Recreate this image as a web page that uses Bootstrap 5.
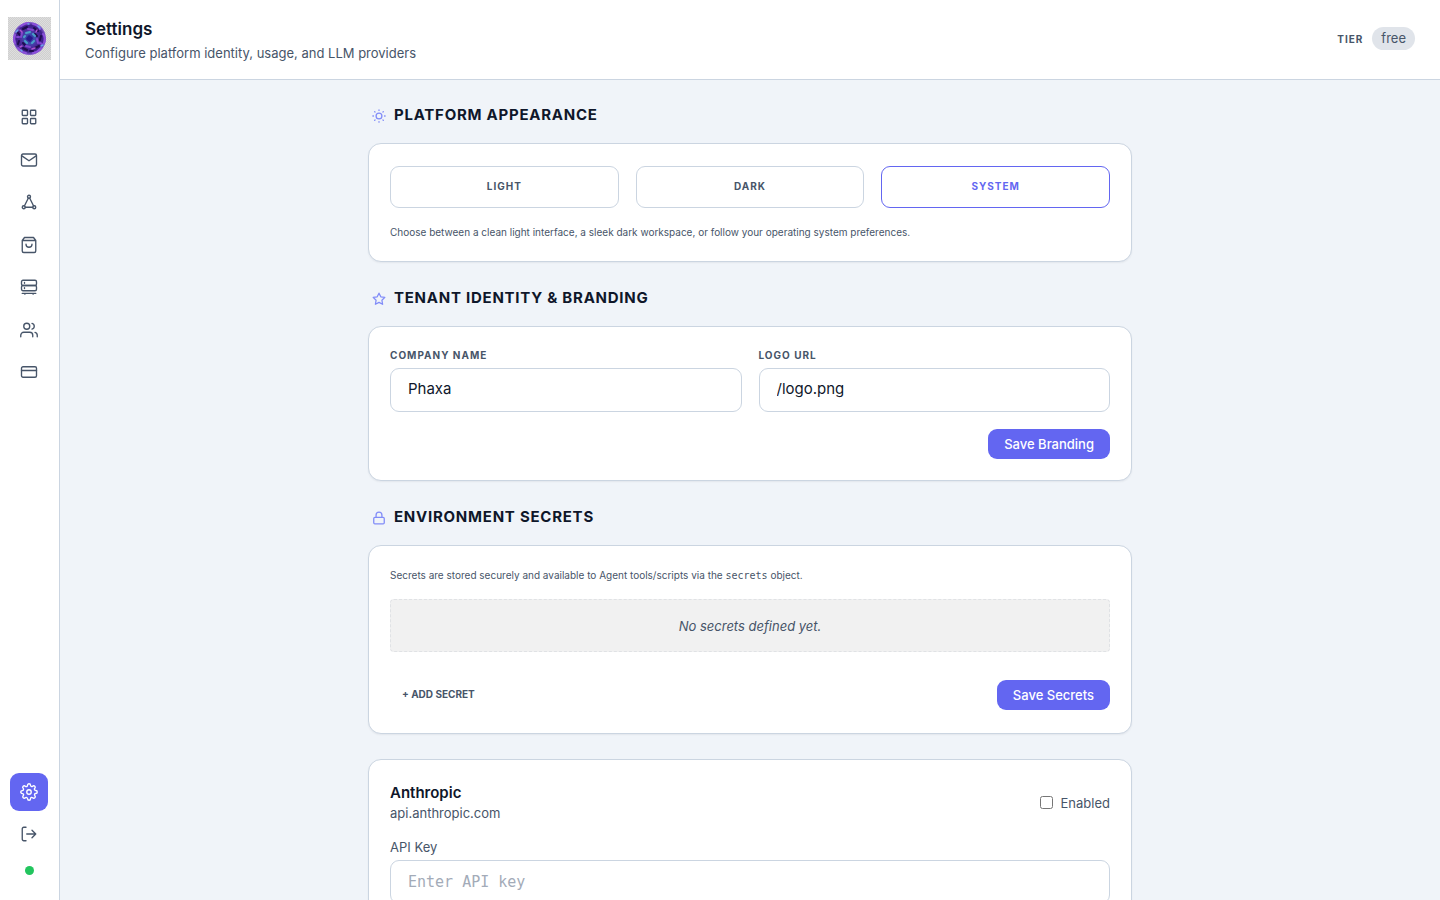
<!DOCTYPE html>
<html lang="en">
<head>
<meta charset="utf-8">
<meta name="viewport" content="width=device-width, initial-scale=1">
<title>Settings</title>
<link href="https://cdn.jsdelivr.net/npm/bootstrap@5.3.0/dist/css/bootstrap.min.css" rel="stylesheet">
<style>
  :root { --ink: #0f172a; --muted: #475569; --line: #cbd5e1; --accent: #6366f1; }
  body { font-family: Inter, sans-serif; font-size: 13px; line-height: 20px; color: var(--ink); background: #f0f4f9; }
  .side-rail { width: 60px; border-right: 1px solid var(--line); padding: 17px 1px 25px 0; }
  .brand-mark { width: 43px; height: 43px; }
  .rail-nav { height: 293px; margin-top: 38px; }
  .rail-link { width: 38px; height: 38px; border-radius: 9px; color: var(--muted); }
  .rail-link.active { background: var(--accent); color: #fff; }
  .rail-link svg { width: 18px; height: 18px; }
  .line-icon { fill: none; stroke: currentColor; stroke-width: 1.8; stroke-linecap: round; stroke-linejoin: round; }
  .status-dot { width: 9px; height: 9px; background: #22c55e; margin-top: 13px; }
  .top-bar { height: 80px; border-bottom: 1px solid var(--line); padding: 0 25px 2px; }
  .top-bar h1 { font-size: 17px; line-height: 28px; font-weight: 600; }
  .muted-text { color: var(--muted); }
  .caps { font-size: 10px; line-height: 12px; font-weight: 700; letter-spacing: 1px; color: var(--muted); }
  .tier { gap: 9px; }
  .tier-pill { background: #e0e4ea; color: var(--muted); font-size: 13px; line-height: 23px; font-weight: 400; padding: 0 9px; }
  .page-scroll { scrollbar-width: none; padding: 24px 16px; }
  .page-scroll::-webkit-scrollbar { display: none; }
  .page-column { max-width: 764px; gap: 25px; }
  .section-title { font-size: 15px; line-height: 22px; font-weight: 700; letter-spacing: .05em; margin-bottom: 17px; padding-left: 4px; gap: 8px; }
  .section-title svg { width: 14px; height: 14px; color: #818cf8; margin-top: 2px; stroke-width: 2.2; }
  .panel { background: #fff; border: 1px solid var(--line); border-radius: 13px; padding: 22px 21px 21px; box-shadow: 0 1px 2px rgba(15, 23, 42, .06); }
  .split { gap: 17px; }
  .theme-btn { height: 42px; border: 1px solid var(--line); border-radius: 9px; background: #fff; padding: 0 0 2px; }
  .theme-btn.active { border-color: var(--accent); color: var(--accent); }
  .fine { font-size: 10px; line-height: 16px; color: var(--muted); }
  .mono { font-family: "DejaVu Sans Mono", monospace; }
  .fine .mono { line-height: 10px; }
  .secrets-note { line-height: 14px; }
  .field-label { margin-bottom: 7px; }
  .field { height: 44px; border: 1px solid var(--line); border-radius: 9px; font-size: 15px; line-height: 22px; color: var(--ink); padding: 0 17px 3px; }
  .field.mono { padding-bottom: 0; }
  .field::placeholder { color: #a3abb8; }
  .actions { margin-top: 17px; }
  .save-btn { height: 30px; border: 0; border-radius: 9px; background: var(--accent); color: #fff; font-size: 13px; line-height: 20px; font-weight: 500; padding: 0 16px; }
  .add-btn { height: 34px; border: 0; font-size: 10px; line-height: 14px; font-weight: 700; color: var(--muted); padding: 0 12px 2px; }
  .empty-box { height: 53px; margin-top: 17px; margin-bottom: 26px; border: 1px dashed #e0e2e5; border-radius: 4px; background: #f1f1f1; }
  .provider-name { font-size: 15px; line-height: 21px; font-weight: 600; }
  .key-label { line-height: 16px; margin: 16px 0 5px; }
  .tick { width: 13px; height: 13px; }
</style>
</head>
<body>
<div class="d-flex vh-100 overflow-hidden">
  <aside class="side-rail bg-white d-flex flex-column align-items-center flex-shrink-0">
    <svg class="brand-mark flex-shrink-0" viewBox="0 0 43 43" role="img" aria-label="Phaxa">
      <defs>
        <pattern id="check" width="2" height="2" patternUnits="userSpaceOnUse"><rect width="2" height="2" fill="#dedede"/><rect width="1" height="1" fill="#cfcfcf"/><rect x="1" y="1" width="1" height="1" fill="#cfcfcf"/></pattern>
        <radialGradient id="orb"><stop offset="0" stop-color="#2b1a93"/><stop offset=".3" stop-color="#3f50b0"/><stop offset=".55" stop-color="#4c2a9c"/><stop offset=".8" stop-color="#3d1e8a"/><stop offset="1" stop-color="#8a62d4"/></radialGradient>
      </defs>
      <rect width="43" height="43" fill="url(#check)"/>
      <circle cx="21.500" cy="21.500" r="16.500" fill="url(#orb)"/>
      <g fill="none" stroke-linecap="round">
        <path d="M13 9q4-3 7-3M25 7q5 1 7 5M35 17q3 4 1 9M33 31q-3 4-8 5M18 36q-5-1-8-5M7 26q-2-4 0-8" stroke="#8c50dc" stroke-width="2"/>
        <path d="M15 12l4-2M26 11l4 3M33 19l-1 4M31 29l-4 2M19 33l-4-2M10 27l1-3M10 16l2 2M22 34h3M27 17l2 2M15 26l2 2" stroke="#1e0d4e" stroke-width="2"/>
        <path d="M20 12l5 1M29 22l1 4M22 30l-4-1M13 20l1-4M32 26l2 1M9 20h2" stroke="#8145cf" stroke-width="2"/>
        <path d="M18 16l4-1M25 17l2 2M26 24l-2 2M19 26l-2-2M16 20l1-1" stroke="#49a0c8" stroke-width="2"/>
        <path d="M8 15l2-2M30 9l2 2M35 28l-2 1M13 33l1 1M20 7h1" stroke="#6ba4ec" stroke-width="1.500"/>
        <path d="M12 13l2 2M24 32l3-1M29 13l-1 2M12 30l2-1" stroke="#ae55cf" stroke-width="1.500"/>
      </g>
      <path d="M21 18l4 3-3 4-4-3z" fill="#29158c"/>
    </svg>
    <nav class="rail-nav d-flex flex-column justify-content-between flex-shrink-0" aria-label="Main">
      <a href="#" class="rail-link d-flex align-items-center justify-content-center" aria-label="Dashboard"><svg class="line-icon" viewBox="0 0 24 24"><rect x="3" y="3" width="7" height="7" rx="1"/><rect x="14" y="3" width="7" height="7" rx="1"/><rect x="3" y="14" width="7" height="7" rx="1"/><rect x="14" y="14" width="7" height="7" rx="1"/></svg></a>
      <a href="#" class="rail-link d-flex align-items-center justify-content-center" aria-label="Messages"><svg class="line-icon" viewBox="0 0 24 24"><rect x="2" y="4" width="20" height="16" rx="2"/><path d="M2.500 6.500l9.500 6.500 9.500-6.500"/></svg></a>
      <a href="#" class="rail-link d-flex align-items-center justify-content-center" aria-label="Workflows"><svg class="line-icon" viewBox="0 0 24 24"><circle cx="12" cy="5" r="2"/><circle cx="5" cy="19" r="2"/><circle cx="19" cy="19" r="2"/><path d="M11 7L6 17M13 7l5 10M7 19h10"/></svg></a>
      <a href="#" class="rail-link d-flex align-items-center justify-content-center" aria-label="Store"><svg class="line-icon" viewBox="0 0 24 24"><path d="M6 2L3 6v14a2 2 0 0 0 2 2h14a2 2 0 0 0 2-2V6l-3-4zM3 6h18M16 11a4 4 0 0 1-8 0"/></svg></a>
      <a href="#" class="rail-link d-flex align-items-center justify-content-center" aria-label="Servers"><svg class="line-icon" viewBox="0 0 24 24"><rect x="2" y="3" width="20" height="7" rx="2"/><rect x="2" y="10" width="20" height="7" rx="2"/><path d="M6 6v1M6 13v1M3 20.500h18M6.500 20.500v1M17.500 20.500v1"/></svg></a>
      <a href="#" class="rail-link d-flex align-items-center justify-content-center" aria-label="Team"><svg class="line-icon" viewBox="0 0 24 24"><path d="M17 21v-2a4 4 0 0 0-4-4H5a4 4 0 0 0-4 4v2M23 21v-2a4 4 0 0 0-3-3.870M16 3.130a4 4 0 0 1 0 7.750"/><circle cx="9" cy="7" r="4"/></svg></a>
      <a href="#" class="rail-link d-flex align-items-center justify-content-center" aria-label="Billing"><svg class="line-icon" viewBox="0 0 24 24"><rect x="2" y="5" width="20" height="14" rx="2"/><path d="M2 10h20"/></svg></a>
    </nav>
    <a href="#" class="rail-link active d-flex align-items-center justify-content-center mt-auto mb-1 flex-shrink-0" aria-label="Settings" aria-current="page"><svg class="line-icon" viewBox="0 0 24 24"><circle cx="12" cy="12" r="3"/><path d="M19.400 15a1.650 1.650 0 0 0 .33 1.820l.06.06a2 2 0 1 1-2.830 2.830l-.06-.06a1.650 1.650 0 0 0-1.820-.33 1.650 1.650 0 0 0-1 1.510V21a2 2 0 0 1-4 0v-.09A1.650 1.650 0 0 0 9 19.400a1.650 1.650 0 0 0-1.820.33l-.06.06a2 2 0 1 1-2.830-2.830l.06-.06a1.650 1.650 0 0 0 .33-1.820 1.650 1.650 0 0 0-1.510-1H3a2 2 0 0 1 0-4h.09A1.650 1.650 0 0 0 4.600 9a1.650 1.650 0 0 0-.33-1.820l-.06-.06a2 2 0 1 1 2.830-2.830l.06.06a1.650 1.650 0 0 0 1.820.33H9a1.650 1.650 0 0 0 1-1.510V3a2 2 0 0 1 4 0v.09a1.650 1.650 0 0 0 1 1.510 1.650 1.650 0 0 0 1.820-.33l.06-.06a2 2 0 1 1 2.830 2.830l-.06.06a1.650 1.650 0 0 0-.33 1.820V9a1.650 1.650 0 0 0 1.510 1H21a2 2 0 0 1 0 4h-.09a1.650 1.650 0 0 0-1.510 1z"/></svg></a>
    <a href="#" class="rail-link d-flex align-items-center justify-content-center flex-shrink-0" aria-label="Sign out"><svg class="line-icon" viewBox="0 0 24 24"><path d="M8 21H5a2 2 0 0 1-2-2V5a2 2 0 0 1 2-2h3M16 17l5-5-5-5M21 12H9"/></svg></a>
    <span class="status-dot rounded-circle flex-shrink-0"></span>
  </aside>

  <div class="d-flex flex-column flex-grow-1 overflow-hidden">
    <header class="top-bar bg-white d-flex align-items-center justify-content-between flex-shrink-0">
      <div>
        <h1 class="mb-0">Settings</h1>
        <p class="muted-text mb-0">Configure platform identity, usage, and LLM providers</p>
      </div>
      <div class="tier d-flex align-items-center">
        <span class="caps">TIER</span>
        <span class="tier-pill badge rounded-pill">free</span>
      </div>
    </header>

    <main class="page-scroll flex-grow-1 overflow-auto">
      <div class="page-column d-flex flex-column mx-auto">
        <section>
          <h2 class="section-title d-flex align-items-center"><svg class="line-icon" viewBox="0 0 24 24"><circle cx="12" cy="12" r="5"/><path d="M12 1.500v1M12 21.500v1M1.500 12h1M21.500 12h1M4.500 4.500l.7.7M18.800 18.800l.7.7M4.500 19.500l.7-.7M18.800 5.200l.7-.7"/></svg>PLATFORM APPEARANCE</h2>
          <div class="panel">
            <div class="split d-flex mb-3">
              <button type="button" class="theme-btn caps flex-fill w-100">LIGHT</button>
              <button type="button" class="theme-btn caps flex-fill w-100">DARK</button>
              <button type="button" class="theme-btn caps active flex-fill w-100" aria-pressed="true">SYSTEM</button>
            </div>
            <p class="fine mb-0">Choose between a clean light interface, a sleek dark workspace, or follow your operating system preferences.</p>
          </div>
        </section>

        <section>
          <h2 class="section-title d-flex align-items-center"><svg class="line-icon" viewBox="0 0 24 24"><path d="M12 2l3.090 6.260L22 9.270l-5 4.870 1.180 6.880L12 17.770l-6.180 3.250L7 14.140 2 9.270l6.910-1.010z"/></svg>TENANT IDENTITY &amp; BRANDING</h2>
          <form class="panel">
            <div class="split d-flex">
              <div class="w-100">
                <label class="caps field-label d-block" for="company">COMPANY NAME</label>
                <input id="company" type="text" class="field form-control" value="Phaxa">
              </div>
              <div class="w-100">
                <label class="caps field-label d-block" for="logo">LOGO URL</label>
                <input id="logo" type="text" class="field form-control" value="/logo.png">
              </div>
            </div>
            <div class="actions d-flex justify-content-end">
              <button type="button" class="save-btn">Save Branding</button>
            </div>
          </form>
        </section>

        <section>
          <h2 class="section-title d-flex align-items-center"><svg class="line-icon" viewBox="0 0 24 24"><rect x="3" y="11" width="18" height="11" rx="2"/><path d="M7 11V7a5 5 0 0 1 10 0v4"/></svg>ENVIRONMENT SECRETS</h2>
          <div class="panel">
            <p class="fine secrets-note mb-0">Secrets are stored securely and available to Agent tools/scripts via the <span class="mono">secrets</span> object.</p>
            <div class="empty-box muted-text fst-italic d-flex align-items-center justify-content-center">No secrets defined yet.</div>
            <div class="d-flex justify-content-between align-items-center">
              <button type="button" class="add-btn bg-transparent">+ ADD SECRET</button>
              <button type="button" class="save-btn">Save Secrets</button>
            </div>
          </div>
        </section>

        <section class="panel">
          <div class="d-flex justify-content-between align-items-center">
            <div>
              <h3 class="provider-name mb-0">Anthropic</h3>
              <p class="muted-text mb-0">api.anthropic.com</p>
            </div>
            <div class="d-flex align-items-center gap-2 muted-text">
              <input id="enabled" type="checkbox" class="tick m-0">
              <label for="enabled">Enabled</label>
            </div>
          </div>
          <label class="key-label muted-text d-block" for="api-key">API Key</label>
          <input id="api-key" type="text" class="field mono form-control" placeholder="Enter API key">
        </section>
      </div>
    </main>
  </div>
</div>
<script src="https://cdn.jsdelivr.net/npm/bootstrap@5.3.0/dist/js/bootstrap.bundle.min.js"></script>
</body>
</html>
